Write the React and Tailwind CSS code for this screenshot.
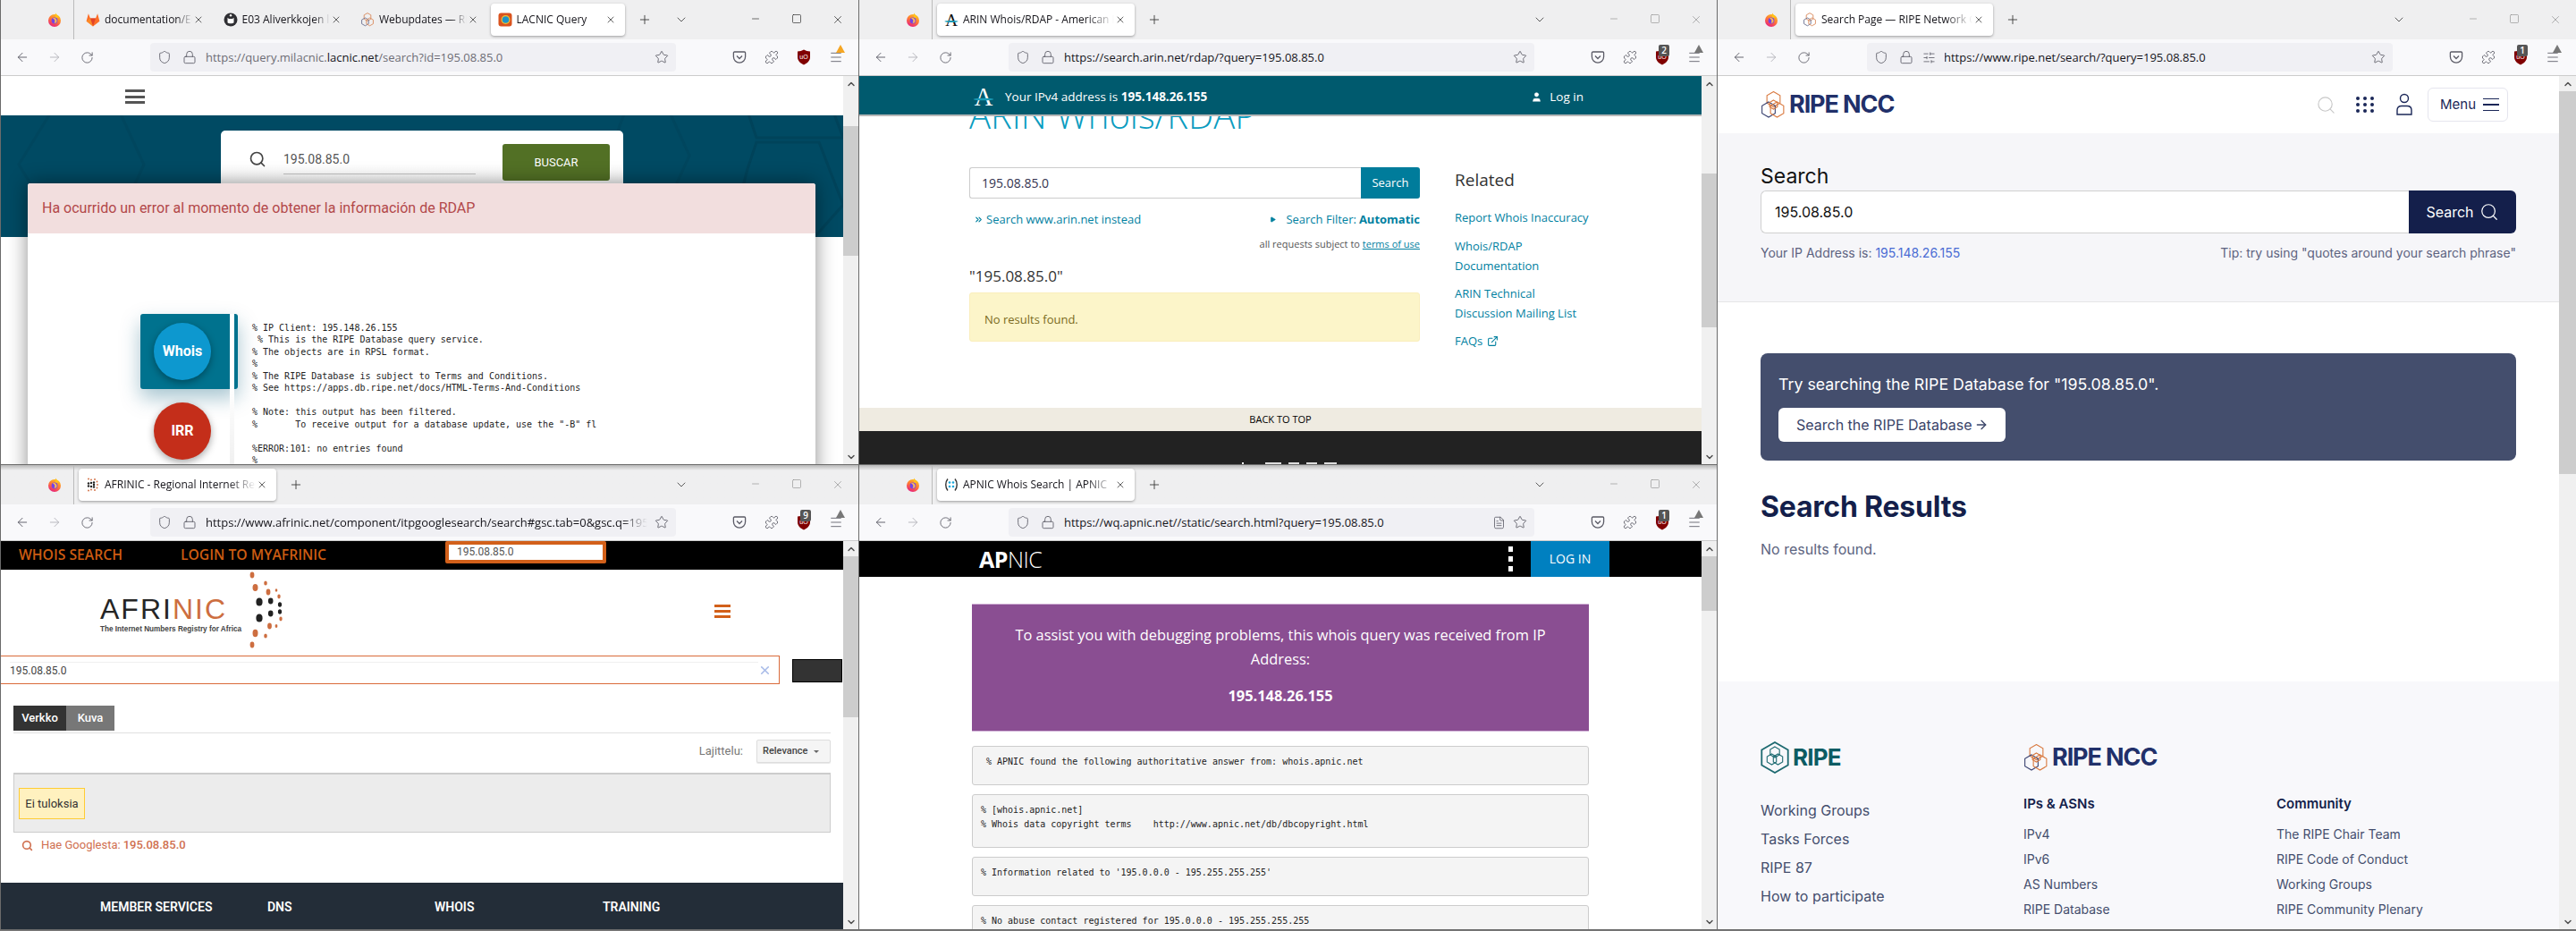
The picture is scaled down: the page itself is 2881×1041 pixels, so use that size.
import React from "react";
import { ArrowLeft, ArrowRight, RotateCw, Shield, Lock, Star, Plus, ChevronDown, ChevronUp, Minus, Square, X, Menu, Puzzle, Search, SlidersHorizontal, FileText, ExternalLink, ChevronsRight, Play, User } from "lucide-react";

function hexPts(cx, cy, r) {
  return [0, 1, 2, 3, 4, 5].map((i) => {
    const a = (Math.PI / 3) * i - Math.PI / 2;
    return `${(cx + r * Math.cos(a)).toFixed(2)},${(cy + r * Math.sin(a)).toFixed(2)}`;
  }).join(" ");
}

function FirefoxIcon() {
  return (
    <svg width="16" height="16" viewBox="0 0 16 16">
      <defs>
        <linearGradient id="ffg" x1="0.7" y1="0" x2="0.2" y2="1">
          <stop offset="0" stopColor="#ffc21a" />
          <stop offset="0.5" stopColor="#ff7139" />
          <stop offset="1" stopColor="#e31587" />
        </linearGradient>
      </defs>
      <circle cx="8" cy="9" r="7" fill="url(#ffg)" />
      <path d="M9 0.5C11 3 12 4 13.5 5.5L9 6Z" fill="#ffc21a" />
      <circle cx="8" cy="9" r="3.4" fill="#7542e5" />
      <path d="M6 6.5C8 5 11 7 10.5 10C10 12 8 12 7.5 11C9 10.5 9 8 6 6.5Z" fill="#ffbd4f" />
    </svg>
  );
}
function GitlabIcon() {
  return (
    <svg width="16" height="16" viewBox="0 0 16 16">
      <path d="M8 15.5L0.6 9.8L2.9 1.2L5 6.6H11L13.1 1.2L15.4 9.8Z" fill="#fc6d26" />
      <path d="M8 15.5L5 6.6H11Z" fill="#e24329" />
      <path d="M8 15.5L0.6 9.8L5 6.6Z" fill="#fca326" opacity="0.55" />
    </svg>
  );
}
function E03Icon() {
  return (
    <svg width="16" height="16" viewBox="0 0 16 16">
      <circle cx="8" cy="8" r="7.5" fill="#2f2f33" />
      <path d="M4.5 6.5V4.5L6 5.8H10L11.5 4.5V6.5L11.5 10C10.5 11.5 5.5 11.5 4.5 10Z" fill="#fff" transform="translate(0,1.2) scale(1)" />
      <circle cx="8" cy="3.2" r="1.2" fill="#fff" />
    </svg>
  );
}
function LacnicIcon() {
  return (
    <svg width="16" height="16" viewBox="0 0 16 16">
      <rect x="0.5" y="0.5" width="15" height="15" rx="3" fill="#d9531e" />
      <circle cx="8.5" cy="8" r="5" fill="#f2c230" />
      <circle cx="8.5" cy="8" r="3.8" fill="#1f93c8" />
    </svg>
  );
}
function ArinIcon({ size = 16, c = "#111" }) {
  return (
    <svg width={size} height={size} viewBox="0 0 16 16">
      <text x="8" y="14.5" textAnchor="middle" fontSize="19" fontFamily="'Liberation Serif',serif" fill={c}>A</text>
      <ellipse cx="8" cy="10" rx="7.6" ry="0.9" fill="#1a9ab5" />
    </svg>
  );
}
function RipeFav() {
  return (
    <svg width="16" height="16" viewBox="0 0 16 16" fill="none" strokeWidth="0.9">
      <polygon points={hexPts(8, 5, 4.4)} stroke="#d98a5c" />
      <polygon points={hexPts(5.4, 10.4, 4.4)} stroke="#6a6f90" />
      <polygon points={hexPts(10.6, 10.4, 4.4)} stroke="#d98a5c" />
    </svg>
  );
}
function AfrinicFav() {
  return (
    <svg width="16" height="16" viewBox="0 0 16 16">
      {[[6, 6], [6, 10], [9, 5.5], [9, 8], [9, 10.5], [3, 6.5], [3, 9.5]].map(([x, y], i) => (
        <circle key={i} cx={x} cy={y} r="1.2" fill="#222" />
      ))}
      {[[3, 1.5], [6, 2.5], [10, 2], [12.5, 4.5], [13, 8], [12.5, 11.5], [10, 14], [6, 13.5], [3, 14.5]].map(([x, y], i) => (
        <circle key={i} cx={x} cy={y} r="0.9" fill="#d0683a" />
      ))}
    </svg>
  );
}
function ApnicFav() {
  return (
    <svg width="16" height="16" viewBox="0 0 16 16" fill="none">
      <path d="M4 1.5C1 5 1 11 4 14.5" stroke="#333" strokeWidth="1.4" />
      <path d="M12 1.5C15 5 15 11 12 14.5" stroke="#333" strokeWidth="1.4" />
      {[[6, 5.5], [6, 10], [10, 5.5], [10, 10]].map(([x, y], i) => (
        <circle key={i} cx={x} cy={y} r="1.3" fill="#1aa6d8" />
      ))}
    </svg>
  );
}
function PocketIcon() {
  return (
    <svg width="16" height="16" viewBox="0 0 16 16" fill="none" stroke="#5b5b66" strokeWidth="1.3">
      <path d="M2.5 2H13.5C14.2 2 14.6 2.5 14.6 3.1V7.5C14.6 11.2 11.6 14.2 8 14.2C4.4 14.2 1.4 11.2 1.4 7.5V3.1C1.4 2.5 1.8 2 2.5 2Z" />
      <path d="M5 6.5L8 9.5L11 6.5" />
    </svg>
  );
}
function UblockIcon({ badge }) {
  return (
    <div className="relative w-[16px] h-[18px]">
      <svg width="16" height="18" viewBox="0 0 16 18">
        <path d="M8 0.5C10 1.8 12.5 2.4 15 2.4V9C15 13 11.5 16 8 17.5C4.5 16 1 13 1 9V2.4C3.5 2.4 6 1.8 8 0.5Z" fill="#800000" />
        <text x="8" y="11" textAnchor="middle" fontSize="7" fontFamily="'Liberation Sans',sans-serif" fill="#fff">uO</text>
      </svg>
      {badge && (
        <div className="absolute left-[4px] top-[-5px] w-[12px] h-[13px] bg-[#555] rounded-[2px] text-white text-[10px] leading-[13px] text-center font-semibold">{badge}</div>
      )}
    </div>
  );
}

function Tab({ icon, title, active, w, dim }) {
  return (
    <div className={`${w} h-[36px] shrink-0 flex items-center pl-[8px] pr-[10px] rounded-[4px] ${active ? "bg-white shadow-[0_1px_3px_rgba(0,0,0,0.35)]" : ""}`}>
      <div className="w-[16px] h-[16px] shrink-0">{icon}</div>
      <div className="flex-1 min-w-0 ml-[5px] overflow-hidden whitespace-nowrap text-[12px] leading-[16px] text-[#15141a] [mask-image:linear-gradient(to_right,black_82%,transparent)]">{title}</div>
      <X size={12} strokeWidth={1.4} className="shrink-0 text-[#222] ml-[1px]" />
    </div>
  );
}

function Window({ tabs, plusGap, url, urlExtra, urlIcon, badge, active, top, cls, bell, thumb, sbW = "w-[17px]", children }) {
  const ctl = active ? "text-[#111]" : "text-[#888]";
  return (
    <div className={`${cls} flex flex-col border-l border-b border-[#6b6b6b] overflow-hidden min-h-0`}>
      <div className={`h-[44px] shrink-0 flex items-center ${top ? "bg-[#efeff0]" : "bg-linear-to-b from-[#b8b8b8] to-[#efeff0] to-[6px]"}`}>
        <div className="w-[82px] h-full shrink-0 border-r border-[#bbbbbb] pl-[52px] flex items-center"><FirefoxIcon /></div>
        <div className="flex items-center gap-[3.5px] ml-[5px]">
          {tabs.map((t, i) => <Tab key={i} {...t} />)}
        </div>
        <Plus size={16} strokeWidth={1.3} className="ml-[14px] text-[#333] shrink-0" />
        <div className="flex-1" />
        <ChevronDown size={16} strokeWidth={1.3} className="text-[#444] shrink-0 mr-[52px]" />
        <div className={`flex shrink-0 ${ctl}`}>
          <div className="w-[46px] flex justify-center"><Minus size={12} strokeWidth={1.2} /></div>
          <div className="w-[46px] flex justify-center"><Square size={12} strokeWidth={1.2} /></div>
          <div className="w-[46px] flex justify-center"><X size={14} strokeWidth={1.1} /></div>
        </div>
      </div>
      <div className="h-[41px] shrink-0 flex items-start pt-[4px] bg-[#f9f9fb] border-b border-[#cccccc] pl-[6px]">
        <div className="flex h-[32px] items-center text-[#5b5b66] shrink-0">
          <div className="w-[36px] flex justify-center"><ArrowLeft size={16} strokeWidth={1.4} /></div>
          <div className="w-[36px] flex justify-center text-[#b4b4ba]"><ArrowRight size={16} strokeWidth={1.4} /></div>
          <div className="w-[36px] flex justify-center"><RotateCw size={15} strokeWidth={1.4} /></div>
        </div>
        <div className="ml-[53px] w-[588px] h-[32px] shrink-0 rounded-[4px] bg-[#f0f0f4] flex items-center pl-[8px] pr-[8px] text-[#5b5b66]">
          <Shield size={16} strokeWidth={1.3} className="shrink-0" />
          <Lock size={16} strokeWidth={1.3} className="ml-[12px] shrink-0" />
          {urlIcon}
          <div className="ml-[10px] flex-1 min-w-0 overflow-hidden whitespace-nowrap text-[13px] leading-[18px] text-[#15141a]">{url}</div>
          {urlExtra}
          <Star size={16} strokeWidth={1.3} className="ml-[8px] shrink-0" />
        </div>
        <div className="ml-[53px] flex h-[32px] items-center text-[#5b5b66] shrink-0">
          <div className="w-[36px] flex justify-center"><PocketIcon /></div>
          <div className="w-[36px] flex justify-center"><Puzzle size={16} strokeWidth={1.3} /></div>
          <div className="w-[36px] flex justify-center"><UblockIcon badge={badge} /></div>
          <div className="w-[36px] flex justify-center relative">
            <Menu size={16} strokeWidth={1.3} />
            <div className={`absolute right-[8px] top-[-6px] w-0 h-0 border-l-[5px] border-r-[5px] border-b-[9px] border-l-transparent border-r-transparent ${bell}`} />
          </div>
        </div>
      </div>
      <div className="flex-1 min-h-0 flex">
        <div className="flex-1 min-w-0 relative overflow-hidden flex flex-col">{children}</div>
        <div className={`${sbW} shrink-0 bg-[#f0f0f0] flex flex-col`}>
          <div className="h-[17px] shrink-0 flex items-center justify-center"><ChevronUp size={12} strokeWidth={3} className="text-[#505050]" /></div>
          <div className={`${thumb} shrink-0 bg-[#cdcdcd]`} />
          <div className="mt-auto h-[17px] shrink-0 flex items-center justify-center"><ChevronDown size={12} strokeWidth={3} className="text-[#505050]" /></div>
        </div>
      </div>
    </div>
  );
}

function Lacnic() {
  const whois = `% IP Client: 195.148.26.155
 % This is the RIPE Database query service.
% The objects are in RPSL format.
%
% The RIPE Database is subject to Terms and Conditions.
% See https://apps.db.ripe.net/docs/HTML-Terms-And-Conditions

% Note: this output has been filtered.
%       To receive output for a database update, use the "-B" fl

%ERROR:101: no entries found
%`;
  return (
    <div className="flex-1 bg-white font-['Roboto']">
      <div className="h-[44px] pl-[139px] pt-[15px]">
        <div className="w-[22px] flex flex-col gap-[3.5px]">
          <div className="h-[3px] bg-[#555]" /><div className="h-[3px] bg-[#555]" /><div className="h-[3px] bg-[#555]" />
        </div>
      </div>
      <div className="h-[136px] bg-[#004a63] relative overflow-hidden pl-[246px] pt-[17px]">
        <svg className="absolute left-0 top-0" width="942" height="136" viewBox="0 0 942 136" fill="none" stroke="#00435a" strokeWidth="3">
          <polygon points="830,-20 925,-20 942,25 915,25 845,25" />
          <polygon points="845,30 915,30 942,100 910,136 815,136 835,60" />
          <polygon points="20,55 60,-10 130,-10 160,55 130,120 60,120" stroke="#00465e" />
          <polygon points="700,-10 745,-10 770,45 745,100 700,100 680,45" stroke="#00465e" />
        </svg>
        <div className="relative w-[450px] h-[130px] bg-linear-to-b from-white from-30% to-[#e8e8e8] rounded-[5px] flex pt-[15px]">
          <Search size={20} strokeWidth={2} className="ml-[31px] mt-[7px] text-[#444]" />
          <div className="ml-[19px] w-[215px] h-[34px] border-b border-[#c4c4c4] text-[14px] leading-[34px] text-[#555]">195.08.85.0</div>
          <div className="ml-[30px] w-[120px] h-[41px] bg-[#527025] rounded-[3px] text-white text-[13px] leading-[41px] text-center">BUSCAR</div>
        </div>
      </div>
      <div className="absolute left-[30px] w-[881px] top-[120px] h-[360px] bg-white rounded-t-[3px] shadow-[0_0_22px_rgba(0,0,0,0.45)]">
        <div className="h-[56px] bg-[#f2dede] rounded-t-[3px] pl-[16px] text-[16px] leading-[56px] text-[#b2484a] whitespace-nowrap">Ha ocurrido un error al momento de obtener la información de RDAP</div>
        <div className="flex pl-[126px] pt-[90px]">
          <div className="relative w-[109px] shrink-0">
            <div className="h-[84px] bg-[#00728e] rounded-[3px] shadow-[0_10px_22px_rgba(0,90,120,0.35)] flex items-center pl-[15px]">
              <div className="w-[64px] h-[64px] rounded-full bg-[#0d98cf] shadow-[0_3px_8px_rgba(0,0,0,0.35)] text-white font-bold text-[16px] leading-[64px] text-center">Whois</div>
            </div>
            <div className="mt-[15px] ml-[15px] w-[64px] h-[64px] rounded-full bg-[#c42e1a] shadow-[0_3px_8px_rgba(0,0,0,0.35)] text-white font-bold text-[16px] leading-[64px] text-center">IRR</div>
            <div className="absolute left-[100px] top-0 w-[5px] h-[200px] bg-linear-to-b from-white from-40% to-[#ebebeb]" />
          </div>
          <pre className="ml-[16px] pt-[9px] font-['DejaVu_Sans_Mono'] text-[10px] leading-[13.45px] text-[#222]">{whois}</pre>
        </div>
      </div>
    </div>
  );
}

function Arin() {
  const link = "text-[13px] leading-[22px] text-[#00809f]";
  return (
    <div className="flex-1 flex flex-col bg-white min-h-0">
      <div className="h-[45px] shrink-0 bg-[#005a6e] border-b-2 border-[#b8b8b8] flex items-center pt-[3px] pl-[127px] pr-[132px] text-white text-[13.5px]">
        <ArinIcon size={24} c="#fff" />
        <span className="ml-[12px]">Your IPv4 address is <b>195.148.26.155</b></span>
        <div className="flex-1" />
        <User size={13} fill="#fff" strokeWidth={1} />
        <span className="ml-[8px]">Log in</span>
      </div>
      <div className="flex-1 min-h-0 overflow-hidden pl-[123px] flex flex-col">
        <div className="h-[48px] -mt-[25px] text-[40px] leading-[48px] font-light text-[#0a9cc0] whitespace-nowrap">ARIN Whois/RDAP</div>
        <div className="flex mt-[34px]">
          <div className="w-[504px] shrink-0">
            <div className="flex h-[35px]">
              <div className="flex-1 border border-[#cccccc] border-r-0 rounded-l-[3px] pl-[13px] text-[14px] leading-[33px] text-[#33334f]">195.08.85.0</div>
              <div className="w-[66px] bg-[#007c9b] rounded-r-[3px] text-white text-[13px] leading-[35px] text-center">Search</div>
            </div>
            <div className="mt-[14px] h-[18px] flex justify-between pl-[5px] text-[13px] leading-[18px] text-[#00809f]">
              <span className="flex items-center"><ChevronsRight size={11} strokeWidth={2.5} className="mr-[3px]" />Search www.arin.net instead</span>
              <span className="flex items-center"><Play size={7} fill="#00809f" className="mr-[11px]" />Search Filter: <b className="ml-[3px]">Automatic</b></span>
            </div>
            <div className="mt-[10px] h-[18px] text-right text-[11px] leading-[18px] text-[#555]">all requests subject to <span className="underline text-[#00809f]">terms of use</span></div>
            <div className="mt-[17px] h-[20px] text-[17px] leading-[20px] text-[#333]">"195.08.85.0"</div>
            <div className="mt-[8px] h-[55px] bg-[#fcf5c9] border border-[#faeebc] rounded-[3px] pl-[16px] text-[13px] leading-[58px] text-[#7a6a20]">No results found.</div>
          </div>
          <div className="ml-[39px]">
            <div className="h-[28px] text-[19px] leading-[28px] text-[#333]">Related</div>
            <div className={`mt-[17px] ${link}`}>Report Whois Inaccuracy</div>
            <div className={`mt-[10px] ${link}`}>Whois/RDAP<br />Documentation</div>
            <div className={`mt-[9px] ${link}`}>ARIN Technical<br />Discussion Mailing List</div>
            <div className={`mt-[9px] flex items-center ${link}`}>FAQs<ExternalLink size={13} strokeWidth={2} className="ml-[5px]" /></div>
          </div>
        </div>
      </div>
      <div className="h-[26px] shrink-0 bg-[#efebe1] text-center text-[11px] leading-[26px] text-black">BACK TO TOP</div>
      <div className="h-[37px] shrink-0 bg-[#222222] flex items-end justify-center gap-[8px] pl-[20px]">
        <div className="w-[2px] h-[2px] bg-white mr-[16px]" />
        <div className="w-[18px] h-[2px] bg-[#ddd]" /><div className="w-[12px] h-[2px] bg-[#ddd]" /><div className="w-[12px] h-[2px] bg-[#ddd]" /><div className="w-[14px] h-[2px] bg-[#ddd]" />
      </div>
    </div>
  );
}

function RipeNccLogo() {
  return (
    <div className="flex items-center">
      <svg width="29" height="30" viewBox="0 0 29 30" fill="none" strokeWidth="1.1">
        <polygon points={hexPts(14.5, 9, 8.5)} stroke="#d9793f" />
        <polygon points={hexPts(9, 20.5, 8.5)} stroke="#3a4270" />
        <polygon points={hexPts(18.5, 20.5, 8.5)} stroke="#d9793f" />
        <polygon points={hexPts(14.5, 15, 5)} stroke="#d9793f" />
      </svg>
      <span className="ml-[3px] font-['Inter'] font-bold text-[27px] leading-[30px] tracking-[-1.1px] text-[#21306a]">RIPE NCC</span>
    </div>
  );
}

function Ripe() {
  const ipsLinks = ["IPv4", "IPv6", "AS Numbers", "RIPE Database"];
  const commLinks = ["The RIPE Chair Team", "RIPE Code of Conduct", "Working Groups", "RIPE Community Plenary"];
  return (
    <div className="flex-1 flex flex-col bg-white font-['Inter'] min-h-0">
      <div className="h-[64px] shrink-0 flex items-center pl-[48px] pr-[57px]">
        <RipeNccLogo />
        <div className="flex-1" />
        <Search size={23} strokeWidth={1.2} className="text-[#c8c8c8]" />
        <svg className="ml-[22px]" width="20" height="20" viewBox="0 0 20 20" fill="#1b2758">
          {[3, 10, 17].flatMap((y) => [2, 10, 18].map((x) => <circle key={`${x}-${y}`} cx={x} cy={y} r="2" />))}
        </svg>
        <svg className="ml-[23px]" width="22" height="26" viewBox="0 0 22 26" fill="none" stroke="#1b2758" strokeWidth="1.4">
          <circle cx="11" cy="6" r="4.5" />
          <path d="M3 24V19C3 16 5 14.5 8 14.5H14C17 14.5 19 16 19 19V24Z" />
        </svg>
        <div className="ml-[15px] w-[90px] h-[38px] border border-[#e5e5ee] rounded-[6px] flex items-center pl-[13px] text-[15px] text-[#1b2758]">
          Menu
          <div className="ml-[8px] w-[18px] flex flex-col gap-[5px]"><div className="h-[1.5px] bg-[#1b2758]" /><div className="h-[1.5px] bg-[#1b2758]" /><div className="h-[1.5px] bg-[#1b2758]" /></div>
        </div>
      </div>
      <div className="h-[189px] shrink-0 bg-[#f6f6f9] border-b border-[#e6e6e6] pl-[48px] pr-[48px] pt-[33px]">
        <div className="h-[30px] text-[23px] leading-[30px] text-[#111]">Search</div>
        <div className="mt-[1px] h-[48px] flex">
          <div className="flex-1 bg-white border border-[#d0d0d0] border-r-0 rounded-l-[6px] pl-[15px] text-[16px] leading-[46px] text-[#111]">195.08.85.0</div>
          <div className="w-[120px] bg-[#141f4b] rounded-r-[6px] flex items-center justify-center text-white text-[16px]">Search<Search size={22} strokeWidth={1.3} className="ml-[6px]" /></div>
        </div>
        <div className="mt-[12px] h-[20px] flex justify-between text-[14px] leading-[20px] text-[#5d6380]">
          <span>Your IP Address is: <span className="text-[#4a6cd4]">195.148.26.155</span></span>
          <span>Tip: try using "quotes around your search phrase"</span>
        </div>
      </div>
      <div className="pl-[48px] pr-[48px]">
        <div className="mt-[57px] h-[120px] bg-[#444e6d] rounded-[8px] pl-[20px] pt-[22px]">
          <div className="h-[26px] text-[17.8px] leading-[26px] text-white">Try searching the RIPE Database for "195.08.85.0".</div>
          <div className="mt-[13px] w-[254px] h-[38px] bg-white rounded-[6px] pl-[20px] flex items-center text-[16px] text-[#3a4468] whitespace-nowrap">Search the RIPE Database<ArrowRight size={16} strokeWidth={2} className="ml-[2px]" /></div>
        </div>
        <div className="mt-[32px] h-[40px] text-[32px] leading-[40px] font-bold text-[#141f4b] tracking-[-0.2px]">Search Results</div>
        <div className="mt-[15px] h-[24px] text-[16px] leading-[24px] text-[#5c6480]">No results found.</div>
      </div>
      <div className="mt-auto h-[277px] shrink-0 bg-[#f8f8fb] pl-[48px] pt-[67px] flex">
        <div className="w-[294px] shrink-0">
          <div className="h-[36px] flex items-center">
            <svg width="33" height="36" viewBox="0 0 33 36" fill="none" strokeWidth="1.1" stroke="#1d6a70">
              <polygon points={hexPts(16, 18, 17)} strokeWidth="1.8" />
              <polygon points={hexPts(16, 12, 6)} />
              <polygon points={hexPts(12.5, 20, 6)} />
              <polygon points={hexPts(19.5, 20, 6)} />
            </svg>
            <span className="ml-[3px] font-bold text-[26px] leading-[30px] tracking-[-0.8px] text-[#0d5c63]">RIPE</span>
          </div>
          <div className="mt-[25px] flex flex-col text-[16px] leading-[32px] text-[#444e6d]">
            <div>Working Groups</div><div>Tasks Forces</div><div>RIPE 87</div><div>How to participate</div>
          </div>
        </div>
        <div>
          <div className="h-[36px] flex items-center"><RipeNccLogo /></div>
          <div className="mt-[23px] flex">
            <div className="w-[283px]">
              <div className="h-[22px] text-[15px] leading-[22px] font-semibold text-[#141f4b]">IPs &amp; ASNs</div>
              <div className="mt-[9px] text-[14px] leading-[28px] text-[#444e6d]">{ipsLinks.map((l) => <div key={l}>{l}</div>)}</div>
            </div>
            <div>
              <div className="h-[22px] text-[15px] leading-[22px] font-semibold text-[#141f4b]">Community</div>
              <div className="mt-[9px] text-[14px] leading-[28px] text-[#444e6d] whitespace-nowrap">{commLinks.map((l) => <div key={l}>{l}</div>)}</div>
            </div>
          </div>
        </div>
      </div>
    </div>
  );
}

function Afrinic() {
  const dark = [[288, 673, 3.6, 4.5], [288, 691, 3.6, 4.5], [300.7, 672, 2.8, 3.4], [300.7, 686, 2.8, 3.4], [311, 676, 2.1, 2.8], [311, 684, 2.1, 2.8]];
  const orange = [[280, 643, 2.4, 3.4], [283.5, 657, 3, 4], [295, 652, 1.8, 2.6], [298, 662, 2.4, 3.4], [307, 660, 1.3, 1.8], [310, 667, 1.7, 2.4], [312, 692, 1.7, 2.4], [307, 700, 1.4, 2], [299.5, 700, 2.4, 3.4], [295, 711, 1.8, 2.6], [283.5, 708, 3, 4.2], [280, 721, 2.4, 3.4]];
  return (
    <div className="flex-1 flex flex-col bg-white min-h-0 font-['Roboto']">
      <div className="h-[32px] shrink-0 bg-black flex items-start pl-[20px] text-[#cc5c12] font-['Open_Sans'] font-semibold text-[15.7px] leading-[30px]">
        <span className="whitespace-nowrap w-[181px]">WHOIS SEARCH</span>
        <span className="whitespace-nowrap w-[296px]">LOGIN TO MYAFRINIC</span>
        <div className="w-[180px] h-[25px] bg-white border-[4px] border-[#d2601a] rounded-[2px] font-['Roboto'] font-normal text-[12px] leading-[17px] pl-[9px] text-[#555]">195.08.85.0</div>
      </div>
      <div className="h-[96px] shrink-0 flex relative">
        <div className="ml-[111px] mt-[31px] w-[160px] shrink-0">
          <div className="font-['Liberation_Sans'] text-[32px] leading-[27px] tracking-[2px] whitespace-nowrap text-[#252525]">AFRI<span className="text-[#cd6e40]">NIC</span></div>
          <div className="mt-[2px] font-['Liberation_Sans'] text-[8.2px] leading-[14px] font-bold text-[#444] whitespace-nowrap">The Internet Numbers Registry for Africa</div>
        </div>
        <svg width="60" height="96" viewBox="270 637 60 96" className="shrink-0">
          {dark.map(([x, y, a, b], i) => <ellipse key={i} cx={x} cy={y} rx={a} ry={b} fill="#222" />)}
          {orange.map(([x, y, a, b], i) => <ellipse key={i} cx={x} cy={y} rx={a} ry={b} fill="#cd6e40" />)}
        </svg>
        <div className="ml-[467px] mt-[39px] w-[18px] flex flex-col gap-[3px]">
          <div className="h-[3px] bg-[#d2601a]" /><div className="h-[3px] bg-[#d2601a]" /><div className="h-[3px] bg-[#d2601a]" />
        </div>
      </div>
      <div className="h-[32px] shrink-0 flex">
        <div className="w-[871px] border border-l-0 border-[#d96a3a] pl-[10px] pr-[8px] py-[2px] flex items-center">
          <div className="flex-1 text-[12px] text-[#444] border-t border-[#f0f0f0]">195.08.85.0</div>
          <X size={15} strokeWidth={2.6} className="text-[#a8bbe8]" />
        </div>
        <div className="ml-[14px] mt-[4px] w-[56px] h-[26px] bg-[#333] border border-black" />
      </div>
      <div className="pl-[14px] pr-[14px] flex-1 flex flex-col">
        <div className="mt-[24px] flex h-[28px] text-white text-[13px] font-medium leading-[28px]">
          <div className="w-[59px] bg-[#333] text-center">Verkko</div>
          <div className="w-[54px] bg-[#777] text-center">Kuva</div>
        </div>
        <div className="mt-[2px] h-[1px] bg-[#e0e0e0]" />
        <div className="mt-[7px] h-[26px] flex justify-end items-center">
          <span className="text-[13px] text-[#777] mr-[15px]">Lajittelu:</span>
          <div className="w-[83px] h-[26px] bg-[#f5f5f5] border border-[#dddddd] rounded-[2px] shadow-[0_1px_1px_rgba(0,0,0,0.1)] flex items-center pl-[6px] text-[11px] font-medium text-[#444]">
            Relevance
            <div className="ml-[6px] w-0 h-0 border-l-[3px] border-r-[3px] border-t-[3px] border-l-transparent border-r-transparent border-t-[#666]" />
          </div>
        </div>
        <div className="mt-[11px] h-[67px] bg-[#ececec] border border-[#cccccc] border-t-2 flex items-center pl-[5px]">
          <div className="w-[74px] h-[35px] bg-[#fff1bf] border border-[#ffcc33] text-[13px] leading-[33px] text-center text-[#333]">Ei tuloksia</div>
        </div>
        <div className="mt-[5px] h-[18px] pl-[9px] flex items-center text-[13px] text-[#d07050]">
          <Search size={13} strokeWidth={3} className="mr-[9px]" />Hae Googlesta: <b className="ml-[3px] font-medium">195.08.85.0</b>
        </div>
      </div>
      <div className="h-[52px] shrink-0 bg-[#232d38] pl-[111px] flex text-white text-[14px] font-semibold leading-[54px]">
        <div className="w-[187px]">MEMBER SERVICES</div>
        <div className="w-[187px]">DNS</div>
        <div className="w-[188px]">WHOIS</div>
        <div>TRAINING</div>
      </div>
    </div>
  );
}

function WhoisBox({ h, children }) {
  return <div className={`${h} shrink-0 bg-[#f4f4f4] border border-[#cccccc] rounded-[3px] pl-[9px] pt-[9px] font-['DejaVu_Sans_Mono'] text-[10px] leading-[16px] whitespace-pre text-[#222]`}>{children}</div>;
}

function Apnic() {
  return (
    <div className="flex-1 flex flex-col bg-white min-h-0">
      <div className="h-[40px] shrink-0 bg-black flex items-center pl-[134px] pr-[103px] text-white">
        <span className="text-[25px] leading-[40px] font-['Open_Sans'] tracking-[-0.5px]"><b>AP</b><span className="font-light">NIC</span></span>
        <div className="flex-1" />
        <div className="w-[5px] flex flex-col gap-[5px]"><div className="h-[6px] bg-white" /><div className="h-[6px] bg-white" /><div className="h-[6px] bg-white" /></div>
        <div className="ml-[20px] w-[88px] h-[40px] bg-[#0080c0] text-[14px] leading-[40px] text-center">LOG IN</div>
      </div>
      <div className="pl-[126px] w-[816px] flex flex-col">
        <div className="mt-[30px] h-[143px] bg-[#8a4e92] border-y border-y-[#d0b0d6] pt-[20px] px-[20px] text-center text-white text-[16.4px] leading-[27px]">
          To assist you with debugging problems, this whois query was received from IP Address:
          <div className="mt-[14px] font-bold">195.148.26.155</div>
        </div>
        <div className="mt-[16px] flex flex-col gap-[10px]">
          <WhoisBox h="h-[44px]">{" % APNIC found the following authoritative answer from: whois.apnic.net"}</WhoisBox>
          <WhoisBox h="h-[60px]">{"% [whois.apnic.net]\n% Whois data copyright terms    http://www.apnic.net/db/dbcopyright.html"}</WhoisBox>
          <WhoisBox h="h-[44px]">{"% Information related to '195.0.0.0 - 195.255.255.255'"}</WhoisBox>
          <WhoisBox h="h-[44px]">{"% No abuse contact registered for 195.0.0.0 - 195.255.255.255"}</WhoisBox>
        </div>
      </div>
    </div>
  );
}

export default function App() {
  return (
    <div className="w-[2881px] h-[1041px] overflow-hidden bg-[#777] grid grid-cols-[960px_960px_961px] grid-rows-[520px_520px] font-['Open_Sans']">
      <Window
        cls="col-start-1 row-start-1"
        top active
        bell="border-b-[#f5a623]"
        thumb="mt-[39px] h-[145px]"
        tabs={[
          { icon: <GitlabIcon />, title: "documentation/E03 - GitLab", w: "w-[150px]" },
          { icon: <E03Icon />, title: "E03 Aliverkkojen laskenta", w: "w-[150px]" },
          { icon: <RipeFav />, title: "Webupdates — RIPE Database", w: "w-[150px]" },
          { icon: <LacnicIcon />, title: <span>LACNIC Query</span>, w: "w-[150px]", active: true },
        ]}
        url={<span className="text-[#6d6d75]">https://query.milacnic.<span className="text-[#15141a]">lacnic.net</span>/search?id=195.08.85.0</span>}
      >
        <Lacnic />
      </Window>
      <Window
        cls="col-start-2 row-start-1"
        top
        badge="2"
        bell="border-b-[#777]"
        thumb="mt-[92px] h-[172px]"
        tabs={[{ icon: <ArinIcon />, title: "ARIN Whois/RDAP - American Registry", w: "w-[221px]", active: true }]}
        url="https://search.arin.net/rdap/?query=195.08.85.0"
      >
        <Arin />
      </Window>
      <Window
        cls="col-start-3 row-start-1 row-span-2"
        top
        badge="1"
        bell="border-b-[#777]"
        sbW="w-[19px]"
        thumb="mt-0 h-[428px]"
        tabs={[{ icon: <RipeFav />, title: "Search Page — RIPE Network Coordination", w: "w-[221px]", active: true }]}
        urlIcon={<SlidersHorizontal size={15} strokeWidth={1.3} className="ml-[10px] shrink-0" />}
        url={<span className="-ml-[1px]">https://www.ripe.net/search/?query=195.08.85.0</span>}
      >
        <Ripe />
      </Window>
      <Window
        cls="col-start-1 row-start-2"
        badge="9"
        bell="border-b-[#777]"
        thumb="mt-0 h-[180px]"
        tabs={[{ icon: <AfrinicFav />, title: "AFRINIC - Regional Internet Registry", w: "w-[221px]", active: true }]}
        url={<span className="block [mask-image:linear-gradient(to_right,black_94%,transparent)]">https://www.afrinic.net/component/itpgooglesearch/search#gsc.tab=0&amp;gsc.q=195.08.85.0</span>}
      >
        <Afrinic />
      </Window>
      <Window
        cls="col-start-2 row-start-2"
        badge="1"
        bell="border-b-[#777]"
        thumb="mt-0 h-[61px]"
        tabs={[{ icon: <ApnicFav />, title: "APNIC Whois Search | APNIC", w: "w-[221px]", active: true }]}
        url="https://wq.apnic.net//static/search.html?query=195.08.85.0"
        urlExtra={<FileText size={15} strokeWidth={1.3} className="shrink-0" />}
      >
        <Apnic />
      </Window>
    </div>
  );
}
